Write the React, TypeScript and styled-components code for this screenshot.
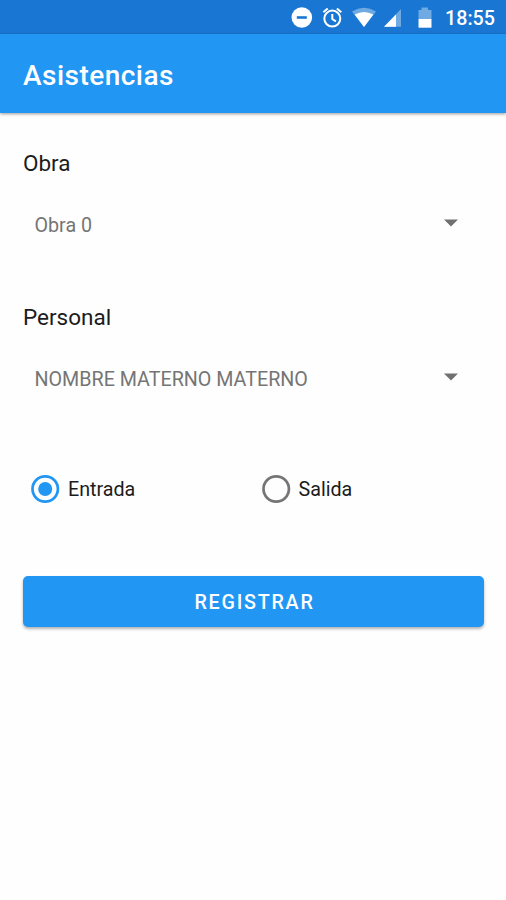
import React, { useState } from "react";
import styled, { createGlobalStyle } from "styled-components";

const GlobalStyle = createGlobalStyle`
  *, *::before, *::after { box-sizing: border-box; }
  body { margin: 0; background: #fefefe; font-family: Roboto, sans-serif; }
`;

const Screen = styled.div`
  display: flex;
  flex-direction: column;
  width: 100%;
  max-width: 506px;
  height: 900px;
  overflow: hidden;
`;

const StatusBar = styled.header`
  display: flex;
  flex: none;
  align-items: center;
  justify-content: flex-end;
  height: 34px;
  padding: 2px 11px 0 0;
  background: #1976d2;
  color: #fff;
`;

const StatusIcons = styled.svg`
  display: block;
  flex: none;
  width: 144px;
  height: 26px;
  margin-right: 11px;
`;

const Clock = styled.time`
  padding-top: 2px;
  font-size: 19.7px;
  line-height: 24px;
  font-weight: 500;
`;

const AppBar = styled.div`
  display: flex;
  flex: none;
  align-items: center;
  height: 79px;
  padding: 4px 23px 0;
  background: #2196f3;
  box-shadow: 0 1px 3px rgba(0, 0, 0, 0.4);
`;

const Title = styled.h1`
  margin: 0;
  color: #fff;
  font-size: 28px;
  line-height: 34px;
  font-weight: 500;
  letter-spacing: 0.47px;
`;

const Form = styled.form`
  display: flex;
  flex-direction: column;
  padding: 35px 22px 0 23px;
`;

const Field = styled.div`
  display: flex;
  flex-direction: column;
  height: 154px;
`;

const FieldLabel = styled.span`
  color: #1c1c1c;
  font-size: 22.5px;
  line-height: 30px;
`;

const Spinner = styled.button`
  display: flex;
  align-items: center;
  justify-content: space-between;
  height: 46px;
  margin-top: 24px;
  padding: 0 26.5px 0 11.5px;
  border: 0;
  background: transparent;
  color: #757575;
  font-family: inherit;
  font-size: 19.7px;
  text-align: left;
`;

const Caret = styled.svg`
  width: 14px;
  height: 8px;
  margin-top: -5px;
`;

const RadioGroup = styled.div`
  display: grid;
  grid-template-columns: 1fr 1fr;
  height: 46px;
  margin-top: 10px;
`;

const RadioOption = styled.button`
  display: flex;
  align-items: center;
  gap: 9px;
  padding: 0 0 0 8px;
  border: 0;
  background: transparent;
  color: #1c1c1c;
  font-family: inherit;
  font-size: 19.7px;
`;

const RadioMark = styled.svg<{ $checked: boolean }>`
  flex: none;
  width: 28px;
  height: 28px;
  overflow: visible;
  color: ${(p) => (p.$checked ? "#2196f3" : "#757575")};
`;

const SubmitButton = styled.button`
  height: 51px;
  margin-top: 64px;
  padding: 1px 0 0 2px;
  border: 0;
  border-radius: 5px;
  background: #2196f3;
  box-shadow: 0 2px 3px rgba(0, 0, 0, 0.3);
  color: #fff;
  font-family: inherit;
  font-size: 19.7px;
  font-weight: 500;
  letter-spacing: 1.76px;
`;

function StatusGlyphs() {
  return (
    <StatusIcons viewBox="0 0 144 26" fill="#fff" aria-hidden="true">
      <circle cx="11.8" cy="12.5" r="10.3" />
      <path d="M6.8 12.5h10" stroke="#1976d2" strokeWidth="2.6" />
      <g fill="none" stroke="#fff" strokeWidth="2">
        <circle cx="42.3" cy="13.6" r="8" />
        <path d="M42.3 9v5l3.6 2.4" />
        <path d="M33.3 7.2l4.4-3.7M51.3 7.2l-4.4-3.7" />
      </g>
      <path d="M62 6.4Q74 -1 86 6.4L74 22Z" opacity="0.38" />
      <path d="M64.6 9.6Q74 4.2 83.4 9.6L74 22Z" />
      <path d="M94 21.8L111 4v17.8Z" opacity="0.38" />
      <path d="M94 21.8L106 9.5v12.3Z" />
      <path d="M128.5 5h3V2.5h6.5V5h3.5v9h-13Z" opacity="0.38" />
      <path d="M128.5 14h13v8.7h-13Z" />
    </StatusIcons>
  );
}

function RadioGlyph({ checked }: { checked: boolean }) {
  return (
    <RadioMark $checked={checked} viewBox="0 0 28 28" aria-hidden="true">
      <circle cx="14.2" cy="14" r="12.7" fill="none" stroke="currentColor" strokeWidth="2.7" />
      {checked && <circle cx="14.2" cy="14" r="7" fill="currentColor" />}
    </RadioMark>
  );
}

function SelectField({ label, value }: { label: string; value: string }) {
  return (
    <Field>
      <FieldLabel>{label}</FieldLabel>
      <Spinner type="button" aria-haspopup="listbox">
        <span>{value}</span>
        <Caret viewBox="0 0 14 8" aria-hidden="true">
          <path d="M0 .5h14L7 7.5z" fill="#707070" />
        </Caret>
      </Spinner>
    </Field>
  );
}

const OPTIONS = ["Entrada", "Salida"];

export default function App() {
  const [selected, setSelected] = useState("Entrada");
  return (
    <>
      <GlobalStyle />
      <Screen>
        <StatusBar>
          <StatusGlyphs />
          <Clock>18:55</Clock>
        </StatusBar>
        <AppBar>
          <Title>Asistencias</Title>
        </AppBar>
        <Form onSubmit={(e) => e.preventDefault()}>
          <SelectField label="Obra" value="Obra 0" />
          <SelectField label="Personal" value="NOMBRE MATERNO MATERNO" />
          <RadioGroup role="radiogroup">
            {OPTIONS.map((option) => (
              <RadioOption
                key={option}
                type="button"
                role="radio"
                aria-checked={selected === option}
                onClick={() => setSelected(option)}
              >
                <RadioGlyph checked={selected === option} />
                {option}
              </RadioOption>
            ))}
          </RadioGroup>
          <SubmitButton type="submit">REGISTRAR</SubmitButton>
        </Form>
      </Screen>
    </>
  );
}
